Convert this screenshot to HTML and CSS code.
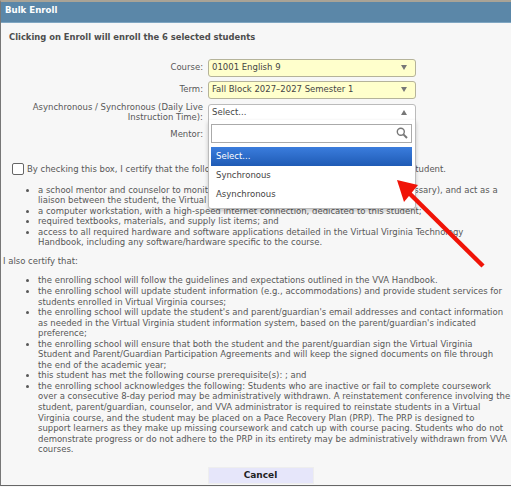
FILE: index.html
```html
<!DOCTYPE html>
<html lang="en">
<head>
    <meta charset="UTF-8">
    <meta name="viewport" content="width=device-width, initial-scale=1.0">
    <title>Bulk Enroll</title>
    <link rel="stylesheet" href="styles.css">
</head>
<body>
    <div class="dialog">
        <div class="title-bar">Bulk Enroll</div>
        <div class="content">
            <p class="intro">Clicking on Enroll will enroll the 6 selected students</p>

            <div class="form-row">
                <label class="form-label">Course:</label>
                <div class="select select-filled">
                    <span>01001 English 9</span>
                    <span class="caret"></span>
                </div>
            </div>
            <div class="form-row">
                <label class="form-label">Term:</label>
                <div class="select select-filled">
                    <span>Fall Block 2027&#8211;2027 Semester 1</span>
                    <span class="caret"></span>
                </div>
            </div>
            <div class="form-row form-row-open">
                <label class="form-label">Asynchronous / Synchronous (Daily Live<br>Instruction Time):</label>
                <div class="select select-open">
                    <span>Select...</span>
                    <span class="caret caret-up"></span>
                    <div class="dropdown">
                        <div class="search-box">
                            <svg class="search-icon" width="12" height="12" viewBox="0 0 12 12">
                                <circle cx="4.8" cy="4.8" r="3.5" fill="none" stroke="#777" stroke-width="1.4"/>
                                <path d="M7.4 7.4L11 11" stroke="#777" stroke-width="2"/>
                            </svg>
                        </div>
                        <div class="option option-active">Select...</div>
                        <div class="option">Synchronous</div>
                        <div class="option">Asynchronous</div>
                    </div>
                </div>
            </div>
            <div class="form-row form-row-mentor">
                <label class="form-label">Mentor:</label>
            </div>

            <div class="certify">
                <span class="checkbox"></span>
                <span>By checking this box, I certify that the following will all be made available to the enrolling student.</span>
            </div>
            <ul class="terms">
                <li>a school mentor and counselor to monitor and support each student's progress (as necessary), and act as a<br>liaison between the student, the Virtual Virginia teacher, and the school;</li>
                <li>a computer workstation, with a high-speed internet connection, dedicated to this student;</li>
                <li>required textbooks, materials, and supply list items; and</li>
                <li>access to all required hardware and software applications detailed in the Virtual Virginia Technology<br>Handbook, including any software/hardware specific to the course.</li>
            </ul>

            <p class="also">I also certify that:</p>
            <ul class="terms terms-second">
                <li>the enrolling school will follow the guidelines and expectations outlined in the VVA Handbook.</li>
                <li>the enrolling school will update student information (e.g., accommodations) and provide student services for<br>students enrolled in Virtual Virginia courses;</li>
                <li>the enrolling school will update the student's and parent/guardian's email addresses and contact information<br>as needed in the Virtual Virginia student information system, based on the parent/guardian's indicated<br>preference;</li>
                <li>the enrolling school will ensure that both the student and the parent/guardian sign the Virtual Virginia<br>Student and Parent/Guardian Participation Agreements and will keep the signed documents on file through<br>the end of the academic year;</li>
                <li>this student has met the following course prerequisite(s): ; and</li>
                <li>the enrolling school acknowledges the following: Students who are inactive or fail to complete coursework<br>over a consecutive 8-day period may be administratively withdrawn. A reinstatement conference involving the<br>student, parent/guardian, counselor, and VVA administrator is required to reinstate students in a Virtual<br>Virginia course, and the student may be placed on a Pace Recovery Plan (PRP). The PRP is designed to<br>support learners as they make up missing coursework and catch up with course pacing. Students who do not<br>demonstrate progress or do not adhere to the PRP in its entirety may be administratively withdrawn from VVA<br>courses.</li>
            </ul>

            <div class="actions">
                <button class="cancel">Cancel</button>
            </div>
        </div>

        <!-- red annotation arrow on top of the screenshot -->
        <svg class="annotation" width="511" height="487" viewBox="0 0 511 487">
            <path d="M483 266L405 189" stroke="#f01408" stroke-width="4.5" fill="none"/>
            <path d="M397 180L418 185L404 202Z" fill="#f01408"/>
        </svg>
    </div>
</body>
</html>
```

FILE: styles.css
```css
/* Basic reset */
* {
    margin: 0;
    padding: 0;
    box-sizing: border-box;
}

body {
    font-family: "DejaVu Sans", Verdana, sans-serif;
    font-size: 8.5px;
    line-height: 10.55px;
    color: #585858;
    background: #f7f7f7;
    height: 487px;
    overflow: hidden;
}

.dialog {
    position: relative;
    height: 486px;
    border-top: 2px solid #a9a396;
    border-left: 1px solid #777;
    border-bottom: 1px solid #666;
    background: #f7f7f7;
}

.title-bar {
    height: 21px;
    padding: 0 4px;
    background: #5b87a8;
    border-bottom: 1px solid #7fa6c2;
    color: #fff;
    font-size: 8.6px;
    font-weight: bold;
    line-height: 16px;
}

.content {
    padding-top: 9px;
}

.intro {
    padding-left: 8px;
    margin-bottom: 16px;
    font-size: 8.4px;
    font-weight: bold;
    color: #4d4d4d;
}

.form-row {
    display: flex;
    align-items: flex-start;
    margin-bottom: 4px;
}

.form-label {
    flex: none;
    width: 202px;
    padding-top: 3px;
    text-align: right;
    white-space: nowrap;
}

.select {
    position: relative;
    display: flex;
    align-items: center;
    justify-content: space-between;
    width: 208px;
    height: 18px;
    margin-left: 5px;
    padding: 0 8px 0 3px;
    border: 1px solid #bbb;
    border-radius: 3px;
    color: #444;
}

.select-filled {
    background: #ffffcc;
    border-color: #b5b39a;
}

.select-open {
    background: #fff;
    border-radius: 3px 3px 0 0;
}

.caret {
    width: 0;
    height: 0;
    border-left: 3px solid transparent;
    border-right: 3px solid transparent;
    border-top: 5px solid #777;
}

.caret-up {
    border-top: 0;
    border-bottom: 5px solid #777;
}

.form-row-open {
    margin-top: 5px;
    margin-bottom: 6px;
}

.form-row-open .form-label {
    margin-top: -2px;
    padding-top: 0;
}

.form-row-mentor {
    height: 22px;
    margin-bottom: 12px;
}

.form-row-mentor .form-label {
    padding-top: 0;
}

.dropdown {
    position: absolute;
    top: 15px;
    left: -1px;
    width: 208px;
    height: 89px;
    padding: 4px 3px 0 2px;
    background: #fff;
    border: 1px solid #bbb;
    border-top: 0;
    border-radius: 0 0 3px 3px;
    box-shadow: 0 2px 4px rgba(0, 0, 0, 0.2);
    z-index: 2;
}

.search-box {
    display: flex;
    align-items: center;
    justify-content: flex-end;
    height: 19px;
    margin-bottom: 4px;
    padding-right: 3px;
    border: 1px solid #aaa;
}

.option {
    height: 19px;
    padding-left: 5px;
    line-height: 19px;
    color: #444;
}

.option-active {
    background: linear-gradient(#3b7ddd, #1f5bb5);
    color: #fff;
}

.certify {
    display: flex;
    align-items: flex-end;
    gap: 3px;
    padding-left: 11px;
    white-space: nowrap;
}

.checkbox {
    flex: none;
    width: 12px;
    height: 12px;
    background: #fff;
    border: 1px solid #666;
    border-radius: 2px;
}

.terms {
    margin-top: 10px;
    padding-left: 37px;
    white-space: nowrap;
}

.terms-second {
    margin-top: 9px;
}

.also {
    margin-top: 8px;
    padding-left: 2px;
}

.actions {
    margin-top: 12px;
    padding-left: 9px;
    text-align: center;
}

.cancel {
    width: 106px;
    height: 17px;
    border: 1px solid #eee;
    background: #e6e6fa;
    color: #222;
    font-family: inherit;
    font-size: 9px;
    font-weight: bold;
}

.annotation {
    position: absolute;
    top: -2px;
    left: -1px;
    pointer-events: none;
    z-index: 3;
}
```
